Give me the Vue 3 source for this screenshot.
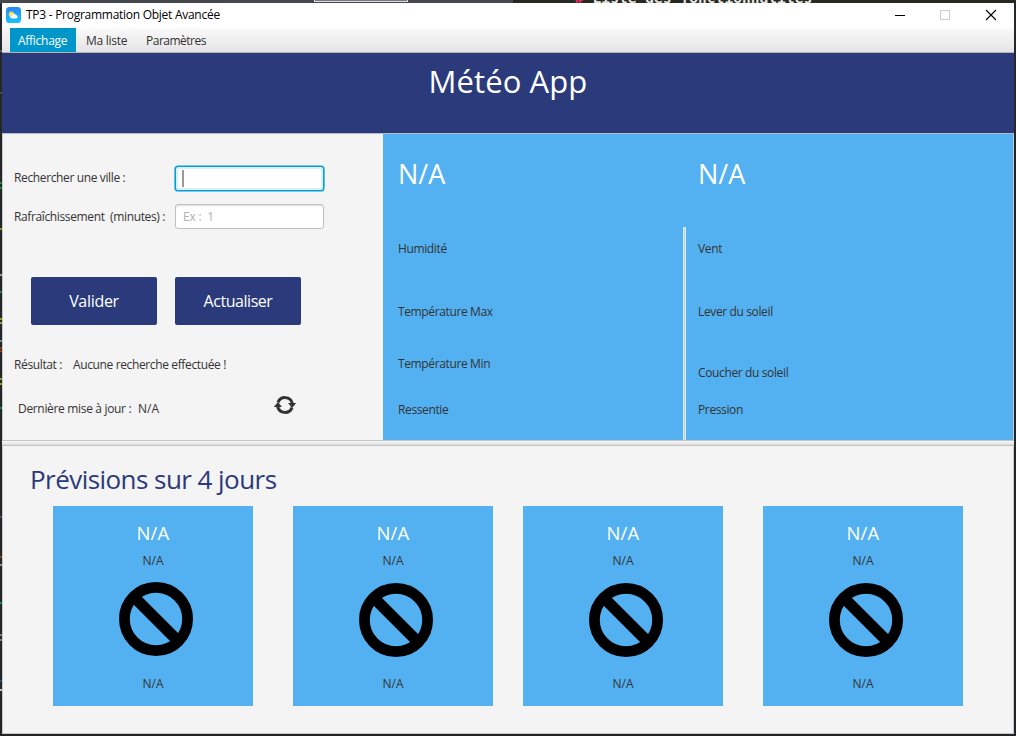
<script setup>
const specks = [
  { y: 50, c: '#55585c' }, { y: 92, c: '#4a4d52' }, { y: 182, c: '#1f8a3c' }, { y: 187, c: '#1f8a3c' },
  { y: 228, c: '#7c9a20' }, { y: 274, c: '#9a9aa8' }, { y: 291, c: '#14806e' }, { y: 318, c: '#7fa52a' },
  { y: 322, c: '#7fa52a' }, { y: 340, c: '#5f86a8' }, { y: 347, c: '#8a3a1c' }, { y: 350, c: '#8a3a1c' },
  { y: 378, c: '#7fa52a' }, { y: 383, c: '#7fa52a' }, { y: 407, c: '#14806e' }, { y: 516, c: '#45546a' },
  { y: 556, c: '#7a4a20' }, { y: 564, c: '#8d8d8d' }, { y: 602, c: '#1f8a3c' }, { y: 634, c: '#777b80' },
  { y: 639, c: '#777b80' }, { y: 680, c: '#2a4a80' }, { y: 689, c: '#c0c0c0' },
]
const leftMetrics = [
  { text: 'Humidité', top: 0 },
  { text: 'Température Max', top: 47 },
  { text: 'Température Min', top: 36 },
  { text: 'Ressentie', top: 30 },
]
const rightMetrics = [
  { text: 'Vent', top: 0 },
  { text: 'Lever du soleil', top: 47 },
  { text: 'Coucher du soleil', top: 45 },
  { text: 'Pression', top: 21 },
]
const days = [1, 2, 3, 4]
</script>

<template>
  <div class="desktop">
    <div class="behind">
      <span class="tab"></span>
      <span class="code"><b>#</b> Liste des fonctionnalités</span>
    </div>
    <i v-for="s in specks" :key="s.y" class="speck" :style="{ top: s.y + 'px', background: s.c }"></i>
    <div class="window">
      <div class="titlebar">
        <svg class="appicon" width="15" height="16" viewBox="0 0 15 16">
          <defs>
            <linearGradient id="sky" x1="0" y1="0" x2="0" y2="1">
              <stop offset="0" stop-color="#2787f8" />
              <stop offset="1" stop-color="#17c3fb" />
            </linearGradient>
          </defs>
          <rect width="15" height="16" rx="3.6" fill="url(#sky)" />
          <circle cx="5.4" cy="7.2" r="2.6" fill="#ffd75e" />
          <path d="M5.8 11.4a1.6 1.6 0 0 1 0-3.2 2.4 2.4 0 0 1 4.2-.2 1.8 1.8 0 0 1 .6 3.4z" fill="#f4fbff" />
        </svg>
        <span class="wtitle">TP3 - Programmation Objet Avancée</span>
        <svg class="controls" width="104" height="12" viewBox="0 0 104 12" shape-rendering="crispEdges">
          <path d="M0 6.5h10" stroke="#000" />
          <rect x="45.5" y="1.5" width="9" height="9" fill="none" stroke="#ccc" />
          <path d="M91 1l10 10M101 1l-10 10" stroke="#000" shape-rendering="auto" stroke-width="1.1" />
        </svg>
      </div>
      <div class="menubar">
        <span class="item active">Affichage</span>
        <span class="item">Ma liste</span>
        <span class="item third">Paramètres</span>
      </div>
      <header class="banner"><h1>Météo App</h1></header>
      <main class="middle">
        <section class="search">
          <div class="row first">
            <span class="label">Rechercher une ville :</span>
            <div class="field focused"><i class="caret"></i></div>
          </div>
          <div class="row second">
            <span class="label">Rafraîchissement&nbsp; (minutes) :</span>
            <div class="field"><span class="ph">Ex :&nbsp; 1</span></div>
          </div>
          <div class="buttons">
            <button class="b1">Valider</button>
            <button class="b2">Actualiser</button>
          </div>
          <div class="result">
            <span class="label l-res">Résultat :</span>
            <span class="label">Aucune recherche effectuée !</span>
          </div>
          <div class="updated">
            <span class="label l-upd">Dernière mise à jour :</span>
            <span class="label na">N/A</span>
            <svg class="refresh" width="24" height="20" viewBox="0 0 24 20">
              <path d="M5 7.4A7.5 7.5 0 0 1 19.3 8.4" fill="none" stroke="#333" stroke-width="3" />
              <path d="M19 12.6A7.5 7.5 0 0 1 4.7 11.6" fill="none" stroke="#333" stroke-width="3" />
              <path d="M15 8h8.2l-4.1 5z" fill="#333" />
              <path d="M.8 12h8.2L4.9 7z" fill="#333" />
            </svg>
          </div>
        </section>
        <section class="weather">
          <div class="col left">
            <div class="big">N/A</div>
            <div class="metrics">
              <span v-for="m in leftMetrics" :key="m.text" class="label" :style="{ marginTop: m.top + 'px' }">{{ m.text }}</span>
            </div>
          </div>
          <div class="sep"></div>
          <div class="col right">
            <div class="big">N/A</div>
            <div class="metrics">
              <span v-for="m in rightMetrics" :key="m.text" class="label" :style="{ marginTop: m.top + 'px' }">{{ m.text }}</span>
            </div>
          </div>
        </section>
      </main>
      <div class="divider"></div>
      <section class="forecast">
        <h2>Prévisions sur 4 jours</h2>
        <div class="cards">
          <article v-for="d in days" :key="d" class="card">
            <div class="day">N/A</div>
            <span class="label na desc">N/A</span>
            <svg class="ban" width="74" height="74" viewBox="0 0 74 74">
              <circle cx="37" cy="37" r="31.6" fill="none" stroke="#000" stroke-width="10.8" />
              <path d="M15 15l44 44" stroke="#000" stroke-width="11.4" />
            </svg>
            <span class="label na temp">N/A</span>
          </article>
        </div>
      </section>
    </div>
  </div>
</template>

<style>
body { overflow: hidden; }
</style>

<style scoped>
* { box-sizing: border-box; }
.desktop {
  position: relative; width: 1016px; height: 736px; padding: 3px 2px 2px;
  background: #252628; overflow: hidden;
  font-family: "Open Sans", "Noto Sans", sans-serif; color: #333;
}
.behind {
  position: absolute; left: 0; top: 0; width: 1016px; height: 3px; overflow: hidden;
  background: linear-gradient(90deg, #45484c 513px, #272822 513px);
}
.tab { position: absolute; left: 314px; top: -8px; width: 94px; height: 10px; background: #777a80; border: 1px solid #ddd; }
.code {
  position: absolute; left: 575px; top: -12px; white-space: pre;
  font: bold 14.6px/20px "DejaVu Sans Mono", monospace; color: #e6e6e0;
}
.code b { color: #f92672; }
.speck { position: absolute; left: 0; width: 2px; height: 2px; }
.window { width: 1012px; height: 731px; display: flex; flex-direction: column; background: #f4f4f4; }
.titlebar { height: 25px; background: #fff; display: flex; align-items: center; padding-left: 4px; flex: none; }
.appicon { margin-bottom: 1px; }
.wtitle { font-size: 12px; line-height: 16px; margin: 0 0 1px 5px; color: #000; white-space: nowrap; letter-spacing: -0.27px; }
.controls { margin-left: auto; margin-right: 15px; margin-bottom: 1px; }
.menubar {
  height: 25px; flex: none; display: flex; padding-left: 8px; border-bottom: 1px solid #b5b5b5;
  background: linear-gradient(#fafafa, #e4e4e4);
}
.item { height: 24px; padding: 0 8px; font-size: 12px; line-height: 26px; margin-right: 2px; white-space: nowrap; width: 58px; letter-spacing: -0.27px; }
.item.active { background: #0096c9; color: #fff; width: 66px; }
.item.third { width: 80px; letter-spacing: -0.5px; }
.banner { height: 80px; flex: none; background: #2b3a7b; display: flex; justify-content: center; }
h1 { margin: 8px 0 0; font-weight: 400; font-size: 31px; line-height: 40px; color: #fff; white-space: nowrap; letter-spacing: 0.1px; }
.middle { height: 307px; flex: none; display: flex; border-top: 1px solid #b9bcc8; border-left: 1px solid #c8c8c8; border-right: 1px solid #c8c8c8; }
.label { font-size: 12px; line-height: 16px; white-space: nowrap; letter-spacing: -0.37px; }
.na { letter-spacing: 0; }
.search { width: 380px; padding: 32px 0 0 11px; }
.row { display: flex; height: 25px; }
.row .label { width: 161px; margin-top: 4px; }
.second { margin-top: 13px; }
.second .label { margin-top: 5px; }
.field { width: 149px; height: 25px; background: #fff; border: 1px solid #bfbfbf; border-radius: 3px; padding: 4px 0 0 7px; box-shadow: inset 0 2px 2px -1px #ddd; }
.focused { border-color: #039ed3; box-shadow: inset 0 0 0 2px #d8f0f9, 0 0 0 .6px #039ed3; padding-left: 6px; }
.caret { display: block; width: 2px; height: 17px; background: #999; margin-top: -1px; }
.ph { display: block; font-size: 12px; line-height: 16px; color: #b0b0b0; letter-spacing: -0.2px; }
.buttons { display: flex; gap: 18px; padding-left: 17px; margin-top: 48px; }
button { width: 126px; height: 48px; border: 0; border-radius: 2px; background: #2b3a7b; color: #fff; font: 16px/22px "Open Sans", sans-serif; padding: 0; white-space: nowrap; }
.b1 { letter-spacing: -0.3px; }
.b2 { letter-spacing: -0.45px; }
.result { display: flex; margin-top: 32px; height: 16px; }
.l-res { width: 59px; }
.updated { display: flex; margin-top: 28px; height: 16px; padding-left: 4px; }
.l-upd { width: 120px; letter-spacing: -0.33px; }
.updated .na { width: 135px; }
.refresh { margin-top: -6px; flex: none; }
.weather { flex: 1; background: #53b1f2; display: flex; }
.col.left { width: 300px; padding: 22px 0 0 15px; }
.col.right { flex: 1; padding: 22px 0 0 12px; }
.big { font-size: 27px; line-height: 36px; color: #fff; height: 36px; font-weight: 400; }
.metrics { display: flex; flex-direction: column; margin-top: 49px; }
.sep { width: 3px; margin-top: 93px; background: #c8ced2; border-left: 1px solid #d9eefb; border-right: 1px solid #d9eefb; }
.divider { height: 6px; flex: none; background: linear-gradient(#fafafa, #dcdcdc); border-top: 1px solid #c4c4c4; border-bottom: 1px solid #c4c4c4; }
.forecast { flex: 1; border: 1px solid #c8c8c8; border-top: 0; }
h2 { margin: 14px 0 0 27px; height: 38px; font-weight: 400; font-size: 26px; line-height: 38px; color: #2b3a7b; white-space: nowrap; letter-spacing: -0.55px; }
.cards { display: flex; margin: 8px 0 0 50px; }
.card { width: 200px; height: 200px; background: #53b1f2; margin-right: 40px; display: flex; flex-direction: column; align-items: center; }
.card:nth-child(2) { margin-right: 30px; }
.day { font-size: 18.5px; line-height: 24px; color: #fff; margin-top: 15px; letter-spacing: 0.2px; }
.desc { margin-top: 8px; }
.ban { margin: 14px 0 0 6px; flex: none; }
.card:first-child .ban { margin-top: 13px; margin-bottom: 1px; }
.temp { margin-top: 19px; }
</style>
